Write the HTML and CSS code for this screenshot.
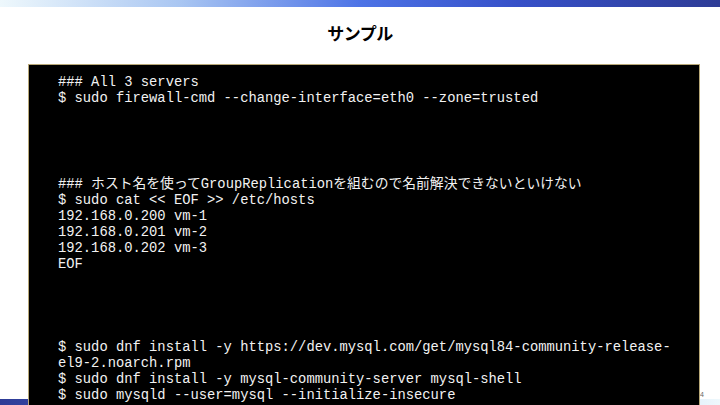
FILE: index.html
```html
<!DOCTYPE html>
<html lang="ja">
<head>
<meta charset="utf-8">
<link rel="stylesheet" href="styles.css">
</head>
<body>
<div class="slide">
  <div class="topbar"></div>
  <h1 class="title">サンプル</h1>
  <div class="terminal">
    <div class="group">
      <div class="line">### All 3 servers</div>
      <div class="line">$ sudo firewall-cmd --change-interface=eth0 --zone=trusted</div>
    </div>
    <div class="group g2">
      <div class="line">### ホスト名を使ってGroupReplicationを組むので名前解決できないといけない</div>
      <div class="line">$ sudo cat &lt;&lt; EOF &gt;&gt; /etc/hosts</div>
      <div class="line">192.168.0.200 vm-1</div>
      <div class="line">192.168.0.201 vm-2</div>
      <div class="line">192.168.0.202 vm-3</div>
      <div class="line">EOF</div>
    </div>
    <div class="group g3">
      <div class="line">$ sudo dnf install -y https://dev.mysql.com/get/mysql84-community-release-</div>
      <div class="line">el9-2.noarch.rpm</div>
      <div class="line">$ sudo dnf install -y mysql-community-server mysql-shell</div>
      <div class="line">$ sudo mysqld --user=mysql --initialize-insecure</div>
    </div>
  </div>
  <div class="pageno">4</div>
  <div class="bottombar"></div>
</div>
</body>
</html>
```
FILE: styles.css
```css
html, body {
  margin: 0;
  padding: 0;
  background: #ffffff;
}
.slide {
  position: relative;
  width: 720px;
  height: 405px;
  overflow: hidden;
  background: #ffffff;
  display: flex;
  flex-direction: column;
}
.topbar {
  height: 7px;
  flex: none;
  background: linear-gradient(to right, #eef8fc 0%, #a9c6f2 25%, #4d73e6 50%, #3650c8 72%, #2e3c96 100%);
}
.title {
  margin: 0;
  flex: none;
  height: 57px;
  line-height: 52px;
  text-align: center;
  font-family: "Noto Sans CJK JP", sans-serif;
  font-weight: 700;
  font-size: 17px;
  color: #000000;
  letter-spacing: -0.5px;
}
.terminal {
  position: relative;
  z-index: 2;
  flex: none;
  margin-left: 28px;
  width: 641px;
  height: 360px;
  background: #000000;
  border: 1px solid #b8a878;
  padding: 10px 0 0 29px;
  font-family: "Liberation Mono", "Noto Sans CJK JP", monospace;
  font-size: 13.8px;
  color: #f2f2f2;
}
.line {
  height: 16px;
  line-height: 16px;
  white-space: pre;
}
.g2 {
  margin-top: 70px;
}
.g3 {
  margin-top: 67px;
}
.pageno {
  position: absolute;
  z-index: 3;
  right: 16px;
  bottom: 7px;
  font-family: "Liberation Sans", sans-serif;
  font-size: 7px;
  color: #666666;
}
.bottombar {
  position: absolute;
  z-index: 1;
  left: 0;
  right: 0;
  bottom: 0;
  height: 6px;
  background: linear-gradient(to right, #2e3c96 0%, #4d73e6 40%, #a9c6f2 75%, #eef8fc 100%);
}
```
